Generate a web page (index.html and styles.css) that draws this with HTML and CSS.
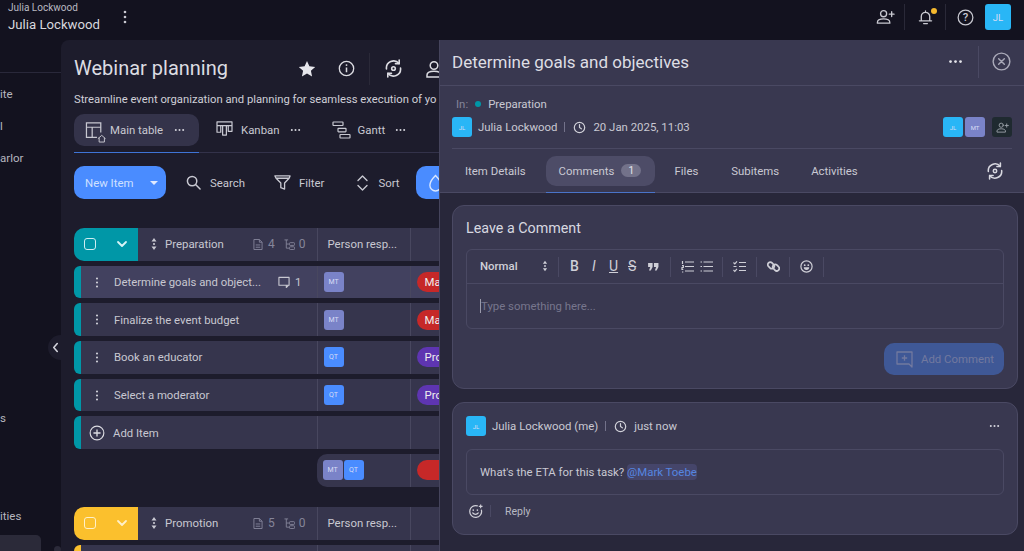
FILE: index.html
```html
<!DOCTYPE html>
<html lang="en">
<head>
<meta charset="utf-8">
<title>Webinar planning</title>
<link rel="stylesheet" href="styles.css">
</head>
<body>
<svg class="defs" width="0" height="0">
  <symbol id="kebab" viewBox="0 0 4 14"><circle cx="2" cy="2" r="1.3"/><circle cx="2" cy="7" r="1.3"/><circle cx="2" cy="12" r="1.3"/></symbol>
  <symbol id="dots" viewBox="0 0 12 4"><circle cx="2" cy="2" r="1.1"/><circle cx="6" cy="2" r="1.1"/><circle cx="10" cy="2" r="1.1"/></symbol>
  <symbol id="sync" viewBox="0 0 20 20"><g fill="none" stroke="currentColor" stroke-width="1.700" stroke-linecap="round" stroke-linejoin="round"><path d="M2.600 10.500A7.500 7.500 0 0 1 15.800 4.800"/><path d="M17.400 9.500A7.500 7.500 0 0 1 4.200 15.200"/><path d="M16 1v3.900h-3.900"/><path d="M4 19v-3.900h3.900"/><circle cx="10" cy="10" r="1.900"/></g></symbol>
  <symbol id="clock" viewBox="0 0 14 14"><g fill="none" stroke="currentColor" stroke-width="1.300" stroke-linecap="round"><circle cx="7" cy="7" r="5.600"/><path d="M7 3.800V7l2 1.400"/></g></symbol>
  <symbol id="updown" viewBox="0 0 6 14"><path fill="currentColor" d="M3 1l2.500 3.500h-5zM3 13L.5 9.500h5z"/><circle cx="3" cy="7" r="1.100" fill="currentColor"/></symbol>
  <symbol id="doc" viewBox="0 0 11 13"><g fill="none" stroke="currentColor" stroke-width="1"><path d="M1 1h6l3 3v8H1z"/><path d="M7 1v3h3M3 7h5M3 9.500h5"/></g></symbol>
  <symbol id="tree" viewBox="0 0 12 12"><g fill="none" stroke="currentColor" stroke-width="1"><path d="M.5 1h4M2.500 1v9h3M2.500 5.500h3"/><rect x="6" y="4" width="5.500" height="3" rx=".8"/><rect x="6" y="8.500" width="5.500" height="3" rx=".8"/></g></symbol>
  <symbol id="chev" viewBox="0 0 12 8"><path fill="none" stroke="currentColor" stroke-width="1.800" stroke-linecap="round" stroke-linejoin="round" d="M2 2l4 4 4-4"/></symbol>
  <symbol id="pplus" viewBox="0 0 20 16"><g fill="none" stroke="currentColor" stroke-width="1.400" stroke-linecap="round"><circle cx="8" cy="4.500" r="3.200"/><path d="M1.500 14.500v-1c0-2 2-3.500 6.500-3.500s6.500 1.500 6.500 3.500v1zM16.500 2.500v5M14 5h5"/></g></symbol>
</svg>

<div class="app">
  <header class="topbar">
    <div class="account">
      <div class="acc-small">Julia Lockwood</div>
      <div class="acc-big">Julia Lockwood</div>
    </div>
    <svg class="top-kebab"><use href="#kebab"/></svg>
    <div class="top-right">
      <svg class="ti-person"><use href="#pplus"/></svg>
      <span class="top-div"></span>
      <span class="bell-wrap">
        <svg class="ti-bell" viewBox="0 0 16 18"><g fill="none" stroke="currentColor" stroke-width="1.400" stroke-linecap="round" stroke-linejoin="round"><path d="M3.500 12.500V8a4.500 4.500 0 0 1 9 0v4.500zM1.500 12.500h13M6 15.500h4M8 2v1.500"/></g></svg>
        <span class="bell-dot"></span>
      </span>
      <span class="top-div"></span>
      <svg class="ti-help" viewBox="0 0 18 18"><circle cx="9" cy="9" r="7.800" fill="none" stroke="currentColor" stroke-width="1.300"/><text x="9" y="13" text-anchor="middle" class="help-q">?</text></svg>
      <span class="avatar big cyan">JL</span>
    </div>
  </header>

  <div class="main">
    <nav class="sidebar">
      <div class="side-head"></div>
      <div class="side-item s1">ite</div>
      <div class="side-item s2">l</div>
      <div class="side-item s3">arlor</div>
      <div class="side-item s4">s</div>
      <div class="side-item s5">ities</div>
      <div class="side-active"></div>
    </nav>

    <section class="board">
      <div class="board-head">
        <h1>Webinar planning</h1>
        <svg class="bi-star" viewBox="0 0 18 18"><path fill="currentColor" d="M9 1l2.400 5.300 5.800.6-4.300 3.900 1.200 5.700L9 13.600l-5.100 2.900 1.200-5.700L.8 6.900l5.800-.6z"/></svg>
        <svg class="bi-info" viewBox="0 0 18 18"><g fill="none" stroke="currentColor" stroke-width="1.400"><circle cx="9" cy="9" r="7.600"/><path d="M9 8v5" stroke-width="1.600"/></g><circle cx="9" cy="5.400" r="1" fill="currentColor"/></svg>
        <span class="bh-div"></span>
        <svg class="bi-sync"><use href="#sync"/></svg>
        <svg class="bi-user" viewBox="0 0 18 18"><g fill="none" stroke="currentColor" stroke-width="1.500"><circle cx="9" cy="5.500" r="3.800"/><path d="M2 17v-2c0-2.500 3-3.800 7-3.800s7 1.300 7 3.800v2z"/></g></svg>
      </div>
      <p class="desc">Streamline event organization and planning for seamless execution of yo</p>

      <div class="views">
        <div class="view active">
          <svg class="vi-main" viewBox="0 0 22 22"><g fill="none" stroke="currentColor" stroke-width="1.300"><path d="M12 16H1V1h15v10M1 5.500h15M7 5.500V16"/><path d="M13 17.500l4-3.500 4 3.500M14.300 16.500v4.500h5.500v-4.500" stroke-width="1"/></g></svg>
          <span>Main table</span><svg class="dots"><use href="#dots"/></svg>
        </div>
        <div class="view v2">
          <svg class="vi-kan" viewBox="0 0 18 16"><g fill="none" stroke="currentColor" stroke-width="1.300"><path d="M1 1h16v4H1zM1 5v7h4V5M7 5v10h4V5M13 5v6h4V5" stroke-linejoin="round"/></g></svg>
          <span>Kanban</span><svg class="dots"><use href="#dots"/></svg>
        </div>
        <div class="view v3">
          <svg class="vi-gantt" viewBox="0 0 19 18"><g fill="none" stroke="currentColor" stroke-width="1.200"><rect x="1" y="1" width="10" height="3.500" rx=".5"/><rect x="6" y="7.300" width="8" height="3.500" rx=".5"/><rect x="8" y="13.500" width="10" height="3.500" rx=".5"/></g></svg>
          <span>Gantt</span><svg class="dots"><use href="#dots"/></svg>
        </div>
      </div>

      <div class="tools">
        <button class="new-item"><span>New Item</span><i class="caret"></i></button>
        <div class="tool t-search"><svg viewBox="0 0 16 16"><g fill="none" stroke="currentColor" stroke-width="1.600" stroke-linecap="round"><circle cx="6.500" cy="6.500" r="5"/><path d="M10.500 10.500l4.500 4.500"/></g></svg><span>Search</span></div>
        <div class="tool t-filter"><svg viewBox="0 0 18 17"><g fill="none" stroke="currentColor" stroke-width="1.400" stroke-linejoin="round"><path d="M1 1.500h16l-1 2.500-4.800 5v6.500l-4-1.500V9L2.200 4zM2.200 4h13.800"/></g></svg><span>Filter</span></div>
        <div class="tool t-sort"><svg viewBox="0 0 11 16"><path fill="none" stroke="currentColor" stroke-width="1.400" stroke-linecap="round" stroke-linejoin="round" d="M1 5.500l4.500-4.500 4.500 4.500M1 10.500l4.500 4.500 4.500-4.500"/></svg><span>Sort</span></div>
        <button class="ai-btn"><svg viewBox="0 0 16 20"><path fill="none" stroke="currentColor" stroke-width="1.500" d="M8 2C5 5 2 9 2 12.500a6 6 0 0 0 12 0C14 9 11 5 8 2z"/></svg></button>
      </div>

      <div class="table">
        <div class="group-row">
          <div class="g-left teal"><span class="check"></span><svg class="g-chev"><use href="#chev"/></svg></div>
          <div class="g-name">
            <svg class="updown"><use href="#updown"/></svg>
            <span class="g-title">Preparation</span>
            <span class="g-counts"><svg class="c-doc"><use href="#doc"/></svg><b>4</b><svg class="c-tree"><use href="#tree"/></svg><b>0</b></span>
          </div>
          <div class="g-col">Person resp...</div>
          <div class="g-col"></div>
        </div>

        <div class="row hl">
          <div class="cell-name teal-edge"><svg class="r-kebab"><use href="#kebab"/></svg><span class="r-text">Determine goals and object...</span>
            <svg class="r-comment" viewBox="0 0 13 13"><path fill="none" stroke="currentColor" stroke-width="1.200" stroke-linejoin="round" d="M1 1.500h11v8.500H1zM9 10v2.500l2.500-2.500"/></svg><span class="r-count">1</span></div>
          <div class="cell"><span class="avatar periw">MT</span></div>
          <div class="cell"><span class="chip red">Ma</span></div>
        </div>
        <div class="row">
          <div class="cell-name teal-edge"><svg class="r-kebab"><use href="#kebab"/></svg><span class="r-text">Finalize the event budget</span></div>
          <div class="cell"><span class="avatar periw">MT</span></div>
          <div class="cell"><span class="chip red">Ma</span></div>
        </div>
        <div class="row">
          <div class="cell-name teal-edge"><svg class="r-kebab"><use href="#kebab"/></svg><span class="r-text">Book an educator</span></div>
          <div class="cell"><span class="avatar blue">QT</span></div>
          <div class="cell"><span class="chip purple">Pro</span></div>
        </div>
        <div class="row">
          <div class="cell-name teal-edge"><svg class="r-kebab"><use href="#kebab"/></svg><span class="r-text">Select a moderator</span></div>
          <div class="cell"><span class="avatar blue">QT</span></div>
          <div class="cell"><span class="chip purple">Pro</span></div>
        </div>
        <div class="row">
          <div class="cell-name teal-edge add"><svg class="add-ic" viewBox="0 0 18 18"><g fill="none" stroke="currentColor" stroke-width="1.300"><circle cx="9" cy="9" r="7.700"/><path d="M9 5v8M5 9h8" stroke-width="1.500"/></g></svg><span class="r-text">Add Item</span></div>
          <div class="cell"></div>
          <div class="cell"></div>
        </div>
        <div class="sum-row">
          <div class="sum-cell"><span class="avatar periw">MT</span><span class="avatar blue">QT</span></div>
          <div class="cell sum-third"><span class="chip red"></span></div>
        </div>

        <div class="group-row second">
          <div class="g-left yellow"><span class="check"></span><svg class="g-chev"><use href="#chev"/></svg></div>
          <div class="g-name">
            <svg class="updown"><use href="#updown"/></svg>
            <span class="g-title">Promotion</span>
            <span class="g-counts"><svg class="c-doc"><use href="#doc"/></svg><b>5</b><svg class="c-tree"><use href="#tree"/></svg><b>0</b></span>
          </div>
          <div class="g-col">Person resp...</div>
          <div class="g-col"></div>
        </div>
        <div class="row">
          <div class="cell-name yellow-edge"></div>
          <div class="cell"></div>
          <div class="cell"></div>
        </div>
      </div>
    </section>
  </div>

  <button class="collapse"><svg viewBox="0 0 8 12"><path fill="none" stroke="currentColor" stroke-width="1.800" stroke-linecap="round" stroke-linejoin="round" d="M6 1.500L2 6l4 4.500"/></svg></button>

  <aside class="drawer">
    <div class="d-head">
      <h2>Determine goals and objectives</h2>
      <svg class="d-dots"><use href="#dots"/></svg>
      <span class="d-div"></span>
      <svg class="d-close" viewBox="0 0 20 20"><g fill="none" stroke="currentColor" stroke-width="1.500" stroke-linecap="round"><circle cx="10" cy="10" r="8.800"/><path d="M7 7l6 6M13 7l-6 6"/></g></svg>
    </div>
    <div class="d-meta">
      <div class="in-line"><span class="in-label">In:</span><i class="in-dot"></i><span>Preparation</span></div>
      <div class="by-line">
        <span class="avatar cyan tiny">JL</span><span class="by-name">Julia Lockwood</span><span class="pipe"></span>
        <svg class="clock"><use href="#clock"/></svg><span>20 Jan 2025, 11:03</span>
        <span class="assignees"><span class="avatar cyan tiny">JL</span><span class="avatar periw tiny">MT</span><span class="avatar dark"><svg><use href="#pplus"/></svg></span></span>
      </div>
    </div>
    <div class="d-tabs">
      <span class="d-tab t1">Item Details</span>
      <span class="d-tab on">Comments<b class="pill">1</b></span>
      <span class="d-tab t3">Files</span>
      <span class="d-tab t4">Subitems</span>
      <span class="d-tab t5">Activities</span>
      <svg class="tab-sync"><use href="#sync"/></svg>
    </div>
    <div class="d-body">
      <div class="card c-form">
        <h3>Leave a Comment</h3>
        <div class="editor">
          <div class="e-bar">
            <span class="e-normal">Normal</span><svg class="e-updown"><use href="#updown"/></svg>
            <span class="e-sep s-a"></span>
            <b class="e-g g-b">B</b><i class="e-g g-i">I</i><span class="e-g g-u">U</span><span class="e-g g-s">S</span>
            <svg class="e-ic i-q" viewBox="0 0 12 10"><path fill="currentColor" d="M0 1h5v4.500L3 9.500H1l1.400-4H0zM6.500 1h5v4.500l-2 4h-2l1.400-4H6.500z"/></svg>
            <span class="e-sep s-b"></span>
            <svg class="e-ic i-ol" viewBox="0 0 13 12"><path fill="none" stroke="currentColor" stroke-width="1.200" d="M4 1.500h9M4 6h9M4 10.500h9M1.500 .5v3M1 5h1.300v2H1v2h1.300M1 11.500h1.300"/></svg>
            <svg class="e-ic i-ul" viewBox="0 0 13 12"><path fill="none" stroke="currentColor" stroke-width="1.200" d="M3.500 1.500H13M3.500 6H13M3.500 10.500H13M.5 1.500h1.500M.5 6h1.500M.5 10.500h1.500"/></svg>
            <span class="e-sep s-c"></span>
            <svg class="e-ic i-ck" viewBox="0 0 13 12"><path fill="none" stroke="currentColor" stroke-width="1.200" d="M6 2h7M6 6h7M6 10h7M.5 2l1.300 1.300L4 .8M.5 9.500l1.300 1.300L4 8.300M.5 6h3"/></svg>
            <span class="e-sep s-d"></span>
            <svg class="e-ic i-ln" viewBox="0 0 13 13"><g fill="none" stroke="currentColor" stroke-width="1.700"><rect x=".4" y="2.900" width="7" height="5" rx="2.500" transform="rotate(45 4 5.500)"/><rect x="5.600" y="5.100" width="7" height="5" rx="2.500" transform="rotate(45 9 7.500)"/></g></svg>
            <span class="e-sep s-e"></span>
            <svg class="e-ic i-em" viewBox="0 0 13 13"><circle cx="6.500" cy="6.500" r="5.600" fill="none" stroke="currentColor" stroke-width="1.200"/><circle cx="4.700" cy="5.200" r=".9" fill="currentColor"/><circle cx="8.300" cy="5.200" r=".9" fill="currentColor"/><path d="M3.800 7.300h5.400a2.700 2.700 0 0 1-5.400 0z" fill="currentColor"/></svg>
            <span class="e-sep s-f"></span>
          </div>
          <div class="e-input"><span class="caret-line"></span>Type something here...</div>
        </div>
        <div class="form-foot">
          <button class="add-comment"><svg viewBox="0 0 17 17"><path fill="none" stroke="currentColor" stroke-width="1.300" stroke-linejoin="round" d="M1 1h15v15l-3-3H1zM8.500 4.200v5.500M5.800 7h5.400"/></svg>Add Comment</button>
        </div>
      </div>

      <div class="card c-item">
        <div class="c-top">
          <span class="avatar cyan tiny">JL</span><span class="by-name">Julia Lockwood (me)</span><span class="pipe"></span>
          <svg class="clock"><use href="#clock"/></svg><span>just now</span>
          <svg class="c-dots"><use href="#dots"/></svg>
        </div>
        <div class="c-msg">What's the ETA for this task? <span class="mention">@Mark Toebe</span></div>
        <div class="c-actions">
          <svg class="react" viewBox="0 0 16 16"><g fill="none" stroke="currentColor" stroke-width="1.300" stroke-linecap="round"><path d="M10 2A6.300 6.300 0 1 0 14.300 6.500"/><path d="M5 9.500c1.500 2 4.500 2 6 0"/></g><circle cx="5.600" cy="6.500" r=".9" fill="currentColor"/><circle cx="10" cy="6.500" r=".9" fill="currentColor"/><path d="M13.500 .5v4M11.500 2.500h4" stroke="currentColor" stroke-width="1.200"/></svg>
          <span class="a-div"></span>
          <span class="reply">Reply</span>
        </div>
      </div>
    </div>
  </aside>
  <span class="side-knob"></span>
</div>
</body>
</html>
```

FILE: styles.css
```css
* { box-sizing: border-box; }
html, body { margin: 0; height: 100%; overflow: hidden; }
body { background: #13121f; color: #d4d4dc; font-family: Roboto, "Liberation Sans", sans-serif; font-size: 11.400px; }
.defs { position: absolute; }
svg { display: block; flex: none; }
h1, h2, h3, p { margin: 0; font-weight: 400; }
button { border: 0; padding: 0; font: inherit; color: inherit; }

.app { position: relative; width: 1024px; height: 551px; overflow: hidden; display: flex; flex-direction: column; }

/* top bar */
.topbar { height: 40px; flex: none; display: flex; align-items: flex-start; padding-left: 8px; }
.acc-small { font-size: 10px; line-height: 14px; color: #b9b9c2; }
.acc-big { font-size: 13.200px; line-height: 20px; color: #d8d8de; }
.account { width: 115px; flex: none; padding-top: 1px; }
.top-kebab { width: 4px; height: 14px; margin-top: 10px; fill: #c9c9d1; }
.top-right { margin-left: auto; display: flex; align-items: center; height: 26px; margin-top: 4px; padding-right: 13px; color: #c9c9d1; }
.ti-person { width: 19px; height: 16px; margin-right: 9px; }
.top-div { width: 1px; height: 26px; background: #2a2938; }
.bell-wrap { position: relative; margin: 0 12px 0 13px; display: block; }
.ti-bell { width: 15px; height: 17px; }
.bell-dot { position: absolute; right: -4px; top: -1px; width: 6px; height: 6px; border-radius: 50%; background: #f5b82e; }
.ti-help { width: 17px; height: 17px; margin: 0 11px 0 11px; }
.help-q { font: 500 12px Roboto, sans-serif; fill: currentColor; }

.avatar { width: 20px; height: 20px; flex: none; border-radius: 3px; display: flex; align-items: center; justify-content: center; font-size: 7px; color: #d8dcf5; }
.avatar.tiny { font-size: 6px; }
.avatar.big { width: 26px; height: 26px; font-size: 9.500px; }
.cyan { background: #29b6f6; }
.periw { background: #7a83c8; }
.blue { background: #4a8cff; }
.dark { background: #1f2a30; color: #9da3ab; }
.dark svg { width: 13px; height: 11px; }

/* main + sidebar */
.main { flex: 1; display: flex; min-height: 0; }
.sidebar { width: 61px; flex: none; background: #13121f; display: flex; flex-direction: column; overflow: hidden; }
.side-head { height: 33px; flex: none; border-bottom: 1px solid #29283a; }
.side-item { font-size: 11.500px; line-height: 20px; color: #b6b6bf; }
.s1 { margin-top: 11px; }
.s2 { margin-top: 11.500px; }
.s3 { margin-top: 12.500px; }
.s4 { margin-top: 240px; }
.s5 { margin-top: 78px; }
.side-active { width: 41px; flex: 1; margin-top: 9px; background: #2b2a39; border-top-right-radius: 5px; }
.collapse { position: absolute; left: 48px; top: 335px; width: 14px; height: 25px; border-radius: 13px 0 0 13px; background: #1d1c2c; color: #d4d4dc; display: flex; align-items: center; justify-content: center; }
.collapse svg { width: 7px; height: 11px; }
.side-knob { position: absolute; left: 54px; top: 546px; width: 7px; height: 7px; border-radius: 50%; background: #2b2a39; }

/* board */
.board { flex: 1; min-width: 0; background: #1d1c2c; border-top-left-radius: 8px; padding-left: 13px; overflow: hidden; }
.board-head { height: 46px; display: flex; align-items: center; padding-top: 11px; white-space: nowrap; }
.board-head h1 { font-size: 20px; color: #dcdce2; width: 224px; flex: none; margin-bottom: 2px; }
.bi-star { width: 18px; height: 18px; color: #e6e6ec; }
.bi-info { width: 17px; height: 17px; margin-left: 22px; color: #dcdce2; }
.bh-div { width: 1px; height: 32px; background: #2a2938; margin-left: 14px; }
.bi-sync { width: 19px; height: 19px; margin-left: 14px; color: #dcdce2; }
.bi-user { width: 18px; height: 18px; margin-left: 22px; color: #dcdce2; }
.desc { font-size: 11.250px; line-height: 16px; margin-top: 6px; white-space: nowrap; color: #cfcfd7; }

.views { display: flex; height: 39px; margin-top: 6px; border-bottom: 1px solid #33324a; width: 400px; align-items: flex-start; }
.view { display: flex; align-items: center; height: 32px; color: #c8c8d1; }
.view.active { width: 125px; background: #34334a; border-radius: 10px; padding-left: 11px; position: relative; }
.view.active::after { content: ""; position: absolute; left: 0; right: 0; top: 38px; height: 1px; background: #3f74d6; }
.vi-main { width: 22px; height: 21px; margin-top: 4px; }
.view.active span { margin-left: 3px; }
.view .dots { width: 11px; height: 4px; fill: #d4d4dc; }
.view.active .dots { margin-left: 11px; }
.v2 { margin-left: 17px; }
.vi-kan { width: 17px; height: 15px; margin-top: -4px; }
.v2 span { margin-left: 8px; }
.v2 .dots { margin-left: 10px; }
.v3 { margin-left: 31px; }
.vi-gantt { width: 19px; height: 18px; }
.v3 span { margin-left: 7px; }
.v3 .dots { margin-left: 10px; }

.tools { display: flex; align-items: center; margin-top: 13px; height: 33px; }
.new-item { width: 92px; height: 33px; border-radius: 10px; background: #4a8cff; color: #cfe0ff; display: flex; align-items: center; padding-left: 11px; }
.caret { width: 0; height: 0; margin-left: 17px; border: 4px solid transparent; border-top: 4px solid #e0eaff; border-bottom: 0; }
.tool { display: flex; align-items: center; color: #c8c8d1; }
.t-search { margin-left: 20px; }
.t-search svg { width: 15px; height: 15px; margin-right: 9px; }
.t-filter { margin-left: 29px; }
.t-filter svg { width: 17px; height: 17px; margin-right: 8px; }
.t-sort { margin-left: 33px; }
.t-sort svg { width: 11px; height: 16px; margin-right: 10px; }
.ai-btn { margin-left: 16px; width: 60px; height: 33px; border-radius: 10px; background: #4a8cff; color: #d8e6ff; padding-left: 12px; display: flex; align-items: center; }
.ai-btn svg { width: 15px; height: 20px; }

.table { margin-top: 29px; display: flex; flex-direction: column; gap: 5px; }
.group-row, .row { display: grid; grid-template-columns: 242.500px 93px 1fr; height: 32.700px; }
.group-row { grid-template-columns: 64px 178.500px 93px 1fr; }
.g-left { border-radius: 10px 0 0 10px; display: flex; align-items: center; padding-left: 10px; }
.teal { background: #0097a7; }
.yellow { background: #fbc02d; }
.check { width: 12px; height: 12px; border: 1.200px solid #cfeef2; border-radius: 3px; }
.yellow .check { border-color: #fff0c9; }
.g-chev { width: 12px; height: 8px; margin-left: 20px; color: #d8f4f7; }
.yellow .g-chev { color: #fff0c9; }
.g-name { background: #36354d; display: flex; align-items: center; padding-left: 13px; color: #c8c8d1; }
.updown { width: 6px; height: 14px; }
.g-title { margin-left: 8px; }
.g-counts { margin-left: auto; display: flex; align-items: center; padding-right: 11px; color: #85859a; font-size: 12px; }
.g-counts b { font-weight: 400; }
.c-doc { width: 10px; height: 13px; margin-right: 5px; }
.c-tree { width: 11px; height: 11px; margin: 0 4px 0 9px; }
.g-col { background: #36354d; border-left: 1px solid #48475f; padding-left: 10px; display: flex; align-items: center; color: #c8c8d1; }

.cell-name { display: flex; align-items: center; background: #36354d; border-left: 7px solid; border-radius: 6px 0 0 6px; padding-left: 14px; color: #c8c8d1; }
.teal-edge { border-left-color: #0097a7; }
.yellow-edge { border-left-color: #fbc02d; }
.hl .cell-name, .hl .cell { background: #42415f; }
.cell { background: #36354d; border-left: 1px solid #48475f; display: flex; align-items: center; padding-left: 6px; min-width: 0; overflow: hidden; }
.r-kebab { width: 4px; height: 11px; fill: #d4d4dc; }
.r-text { margin-left: 15px; font-size: 11.330px; white-space: nowrap; }
.r-comment { width: 12px; height: 12px; margin-left: 17px; }
.r-count { margin-left: 5px; }
.chip { height: 20px; min-width: 60px; border-radius: 10px; padding-left: 8px; color: #eee; display: flex; align-items: center; }
.red { background: #c62828; }
.purple { background: #5e35b1; }
.add { padding-left: 8px; }
.add-ic { width: 16px; height: 16px; color: #dcdce2; }
.add .r-text { margin-left: 8px; }
.sum-row { display: grid; grid-template-columns: 93px 1fr; margin-left: 242.500px; height: 32.700px; }
.sum-cell { background: #36354d; border-radius: 10px 0 0 10px; display: flex; align-items: center; padding-left: 6px; gap: 1px; }
.group-row.second { margin-top: 15px; }

/* drawer */
.drawer { position: absolute; left: 439px; top: 40px; width: 585px; height: 511px; background: #28273a; border-left: 1px solid #45445c; display: flex; flex-direction: column; color: #c9c9d3; }
.d-head { height: 46px; flex: none; background: #393850; border-bottom: 1px solid #4a4963; display: flex; align-items: center; padding: 0 0 2px 12px; }
.d-head h2 { font-size: 17px; color: #dedee4; }
.d-dots { width: 15px; height: 5px; margin-left: auto; fill: #e4e4ea; }
.d-div { width: 1px; height: 32px; background: #4a4963; margin-left: 15px; }
.d-close { width: 19px; height: 19px; margin: 0 13px 0 13px; color: #a9a9b8; }
.d-meta { height: 63px; flex: none; background: #393850; padding: 10px 12px 0; position: relative; }
.d-meta::after { content: ""; position: absolute; left: 12px; right: 12px; bottom: 0; height: 1px; background: #4a4963; }
.in-line { display: flex; align-items: center; line-height: 16px; padding-left: 4px; }
.in-label { color: #85859a; }
.in-dot { width: 6px; height: 6px; border-radius: 50%; background: #0097a7; margin: 0 7px 0 7px; }
.by-line { display: flex; align-items: center; margin-top: 5px; height: 20px; }
.by-name { margin-left: 6px; }
.pipe { width: 1px; height: 10px; background: #73728a; margin: 0 8px 0 7px; }
.clock { width: 13px; height: 13px; margin: 0 7px 0 0; color: #d0d0d8; }
.assignees { margin-left: auto; display: flex; align-items: center; gap: 2px; }
.assignees .dark { margin-left: 5px; }
.d-tabs { height: 44px; flex: none; background: #393850; border-bottom: 1px solid #4a4963; display: flex; align-items: flex-start; padding: 7px 0 0 12px; }
.d-tab { height: 30px; display: flex; align-items: center; padding-bottom: 1px; color: #c9c9d3; }
.t1 { padding-left: 13px; }
.d-tab.on { width: 109px; margin-left: 20px; padding-left: 13px; background: #4d4c67; border-radius: 10px; position: relative; }
.d-tab.on::after { content: ""; position: absolute; left: 0; right: 0; top: 36px; height: 1px; background: #4a74c9; }
.pill { margin-left: 7px; width: 20px; height: 13px; border-radius: 7px; background: #73728a; color: #e6e6ec; font-weight: 400; font-size: 10px; display: flex; align-items: center; justify-content: center; }
.t3 { margin-left: 20px; }
.t4 { margin-left: 33px; }
.t5 { margin-left: 32px; }
.tab-sync { width: 18px; height: 18px; margin: 6px 20px 0 auto; color: #d8d8e0; }

.d-body { flex: 1; padding: 12px 6px 0 12px; display: flex; flex-direction: column; gap: 13px; min-height: 0; }
.card { background: #393850; border: 1px solid #4a4963; border-radius: 12px; padding: 0 13px; flex: none; }
.c-form { height: 184px; }
.card h3 { font-size: 14.300px; line-height: 18px; margin-top: 13px; color: #d8d8e0; }
.editor { margin-top: 12px; height: 80px; border: 1px solid #4a4963; border-radius: 6px; }
.e-bar { position: relative; height: 34px; border-bottom: 1px solid #4a4963; }
.e-normal, .e-updown, .e-sep, .e-g, .e-ic { position: absolute; }
.e-normal { left: 13px; top: 9px; font-weight: 500; color: #d0d0d8; }
.e-updown { left: 75px; top: 10px; width: 6px; height: 12px; color: #cfcfd7; }
.e-sep { width: 1px; height: 20px; top: 7px; background: #4a4963; }
.s-a { left: 91px; } .s-b { left: 203px; } .s-c { left: 255px; } .s-d { left: 289px; } .s-e { left: 322px; } .s-f { left: 356px; }
.e-g { top: 8px; font-size: 14px; line-height: 16px; color: #cfcfd7; }
.g-b { left: 103px; font-weight: 500; } .g-i { left: 125px; } .g-u { left: 142px; text-decoration: underline; } .g-s { left: 161px; text-decoration: line-through; }
.e-ic { top: 10px; width: 13px; height: 13px; color: #cfcfd7; }
.i-q { left: 181px; top: 12px; width: 11px; height: 9px; }
.i-ol { left: 214px; } .i-ul { left: 233px; } .i-ck { left: 266px; } .i-ln { left: 300px; } .i-em { left: 333px; }
.e-input { height: 44px; padding: 14px 0 0 13px; color: #77768d; line-height: 16px; position: relative; }
.caret-line { display: inline-block; width: 1px; height: 14px; background: #9a9aab; vertical-align: -3px; }
.form-foot { display: flex; justify-content: flex-end; margin-top: 14px; }
.add-comment { width: 120px; height: 32px; border-radius: 10px; background: #3f5896; color: #72799f; display: flex; align-items: center; padding-left: 12px; gap: 8px; }
.add-comment svg { width: 17px; height: 17px; }

.c-item { height: 133px; }
.c-top { display: flex; align-items: center; height: 20px; margin-top: 13px; }
.c-dots { width: 11px; height: 4px; margin-left: auto; margin-right: 4px; fill: #d8d8e0; }
.c-msg { margin-top: 13px; height: 46px; border: 1px solid #4a4963; border-radius: 6px; padding: 14px 13px; line-height: 16px; }
.mention { background: #45456a; color: #5585e0; border-radius: 4px; padding: 1px 0; }
.c-actions { display: flex; align-items: center; height: 16px; margin-top: 8px; padding-left: 2px; }
.react { width: 15px; height: 15px; color: #d0d0d8; }
.a-div { width: 1px; height: 12px; background: #4a4963; margin: 0 14px 0 7px; }
.reply { font-size: 10.500px; color: #b8b8c3; }
```
